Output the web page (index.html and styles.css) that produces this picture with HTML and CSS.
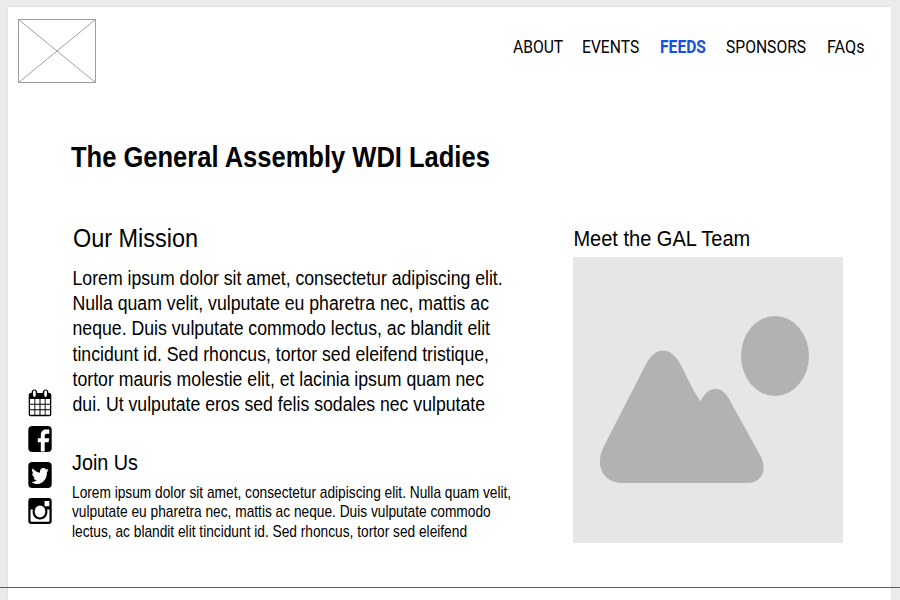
FILE: index.html
```
<!DOCTYPE html>
<html lang="en">
<head>
<meta charset="utf-8">
<title>The General Assembly WDI Ladies</title>
<link rel="stylesheet" href="styles.css">
</head>
<body>
<div class="page">
  <header class="header">
    <svg class="logo" viewBox="0 0 80 66"><path d="M1.500 1.500H78.500V64.500H1.500ZL78.500 64.500M78.500 1.500L1.500 64.500"/></svg>
    <nav class="nav">
      <a class="about"><span>ABOUT</span></a>
      <a class="events"><span>EVENTS</span></a>
      <a class="feeds"><span>FEEDS</span></a>
      <a class="sponsors"><span>SPONSORS</span></a>
      <a class="faqs"><span>FAQs</span></a>
    </nav>
  </header>
  <h1 class="title">The General Assembly WDI Ladies</h1>
  <main class="content">
    <aside class="social">
      <svg viewBox="0 0 24 28"><path d="M3.500 4Q3.500 .5 6.500 .5Q9.300 .5 9.300 4H14.700Q14.700 .5 17.500 .5Q20.500 .5 20.500 4H21.500Q23.300 4 23.300 6V25.500Q23.300 27.200 21.500 27.200H2.500Q.7 27.200 .7 25.500V6Q.7 4 2.500 4Z"/><path class="cut" d="M2 10H6.400V14.800H2ZM7.300 10H11.500V14.800H7.300ZM12.500 10H16.700V14.800H12.500ZM17.600 10H22V14.800H17.600ZM2 15.800H6.400V20.300H2ZM7.300 15.800H11.500V20.300H7.300ZM12.500 15.800H16.700V20.300H12.500ZM17.600 15.800H22V20.300H17.600ZM2 21.300H6.400V25.800H2ZM7.300 21.300H11.500V25.800H7.300ZM12.500 21.300H16.700V25.800H12.500ZM17.600 21.300H22V25.800H17.600Z"/><path class="clip" d="M6.400 2.700V6.600M17.600 2.700V6.600"/></svg>
      <svg viewBox="0 0 24 28"><rect x=".3" y="1" width="23.400" height="26" rx="4"/><path class="cut" d="M12.800 26.500V17.300H9.800V13.200H12.800V10.400C12.800 6.500 15 4.600 18.200 4.600H21.300V8.700H19C17.200 8.700 16.700 9.500 16.700 10.900V13.200H21.200L20.600 17.300H16.700V26.500Z"/></svg>
      <svg viewBox="0 0 24 28"><rect x=".3" y="1" width="23.400" height="26" rx="4"/><path class="cut" d="M20.600 8.900C20 9.300 19.300 9.500 18.700 9.600C19.400 9.100 19.900 8.300 20.200 7.400C19.500 7.900 18.800 8.200 18 8.400C15.600 5.500 11.300 7.600 12.100 11.700C9.100 11.500 6.500 9.900 4.700 7.300C3.600 9.300 4.100 11.400 5.800 12.800C5.200 12.700 4.700 12.600 4.200 12.300C4.200 14.500 5.500 16 7.100 16.600C6.600 16.700 6 16.700 5.500 16.600C5.900 18.200 7.200 19.200 8.700 19.300C7.300 20.500 5.500 21.100 3.500 20.900C10.800 26.100 19.200 20.600 18.900 11.300C19.600 10.700 20.200 9.900 20.600 8.900Z"/></svg>
      <svg viewBox="0 0 24 28"><rect x=".3" y="1" width="23.400" height="26" rx="3"/><path class="cut" d="M2.500 12.500H4.800C3.700 18.500 7.300 22.500 12 22.500S20.300 18.500 19.200 12.500H21.500V24Q21.500 24.800 20.500 24.800H3.500Q2.500 24.800 2.500 24Z"/><ellipse class="cut" cx="12" cy="14.500" rx="5.300" ry="6"/><rect class="cut" x="16.500" y="4" width="4.800" height="5.200" rx=".6"/></svg>
    </aside>
    <section class="copy">
      <h2 class="mission-title">Our Mission</h2>
      <p class="mission">Lorem ipsum dolor sit amet, consectetur adipiscing elit.<br>Nulla quam velit, vulputate eu pharetra nec, mattis ac<br>neque. Duis vulputate commodo lectus, ac blandit elit<br>tincidunt id. Sed rhoncus, tortor sed eleifend tristique,<br>tortor mauris molestie elit, et lacinia ipsum quam nec<br>dui. Ut vulputate eros sed felis sodales nec vulputate</p>
      <h2 class="join-title">Join Us</h2>
      <p class="join">Lorem ipsum dolor sit amet, consectetur adipiscing elit. Nulla quam velit,<br>vulputate eu pharetra nec, mattis ac neque. Duis vulputate commodo<br>lectus, ac blandit elit tincidunt id. Sed rhoncus, tortor sed eleifend</p>
    </section>
    <section class="team">
      <h2 class="team-title">Meet the GAL Team</h2>
      <svg class="photo" viewBox="0 0 270 286"><ellipse cx="202" cy="99" rx="34" ry="40"/><path d="M30 191L71.500 110C82 88 98 88 109 110C115 123 121 135 127.500 144.500C136 127 149 129 156 142L187 198C195 213 189 226 174 226H50C30 226 22 209 30 191Z"/></svg>
    </section>
  </main>
</div>
<div class="fold"></div>
</body>
</html>
```
FILE: styles.css
```
* { box-sizing: border-box; margin: 0; padding: 0; }
body {
  height: 600px;
  padding: 7px 9px 0 8px;
  overflow: hidden;
  background: #ebebeb;
  color: #000;
  font-family: "Liberation Sans", Arial, sans-serif;
}
.page { height: 593px; background: #fff; box-shadow: 0 0 1px #bbb; }
.header { display: flex; justify-content: space-between; height: 132px; padding: 11px 25px 0 9px; }
.logo { width: 80px; height: 66px; fill: none; stroke: #858585; stroke-width: .8; }
.nav { display: flex; gap: 19px; height: 24px; margin-top: 17px; font: 17.800px/24px Roboto, sans-serif; }
.nav span, h1, h2, p { display: block; white-space: nowrap; transform: scaleX(.88); transform-origin: 0 0; }
.about { width: 50px; }
.events { width: 59px; }
.feeds { width: 47px; color: #1550e0; font-weight: 700; }
.sponsors { width: 82px; }
.faqs { width: 39px; }
.nav .faqs span { transform: scaleX(.91); }
.title { height: 83px; margin-left: 63px; font-size: 29px; line-height: 36px; }
.content { display: grid; grid-template-columns: 45px 501px 270px; padding-left: 19px; }
.social { display: flex; flex-direction: column; gap: 8px; padding-top: 167px; }
.social svg { width: 24px; height: 28px; margin-left: .5px; }
.cut { fill: #fff; }
.clip { fill: none; stroke: #fff; stroke-width: 2.600; stroke-linecap: round; }
h2 { font-weight: 400; }
.mission-title { height: 44px; padding-left: 1px; font-size: 26.700px; line-height: 32px; }
.mission { height: 183px; padding-left: .6px; font-size: 20px; line-height: 25.200px; transform: scaleX(.8835); }
.join-title { height: 33.500px; font-size: 22.500px; line-height: 28px; }
.join { font-size: 15.750px; line-height: 19.600px; transform: scaleX(.871); }
.team-title { height: 35px; padding: 3px 0 0 .5px; font-size: 22.300px; line-height: 28px; transform: scaleX(.897); }
.photo { display: block; width: 270px; height: 286px; background: #e6e6e6; fill: #b2b2b2; }
.fold { position: absolute; left: 0; top: 587px; width: 900px; height: 1px; background: #2868b0; }
```
